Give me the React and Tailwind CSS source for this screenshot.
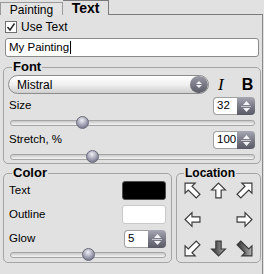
import React from "react";

function Spinner({ value, className }) {
  return (
    <div className={"flex h-[18px] w-[42px] " + className}>
      <div className="flex-1 bg-white border border-[#a0a0a0] border-r-0 rounded-l-[4px] flex items-center pl-[3px] text-[11.5px] leading-none text-black">
        {value}
      </div>
      <div className="w-[18px] rounded-r-[4px] bg-linear-to-b from-[#a8a8b4] via-[#7c7c88] to-[#5a5a66] flex flex-col items-center justify-center gap-[1px]">
        <svg width="7" height="4" viewBox="0 0 7 4"><path d="M0 4 L3.5 0 L7 4Z" fill="#f4f4f8" /></svg>
        <div className="w-[10px] h-px bg-[#c8c8d0]" />
        <svg width="7" height="4" viewBox="0 0 7 4"><path d="M0 0 L3.5 4 L7 0Z" fill="#f4f4f8" /></svg>
      </div>
    </div>
  );
}

function Slider({ pos, className }) {
  return (
    <div className={"relative h-[13px] flex items-center " + className}>
      <div className="w-full h-[6px] rounded-full border border-[#a4a4a4] bg-linear-to-b from-[#c8c8c8] to-[#f6f6f6]" />
      <div
        className="absolute top-0 w-[13px] h-[13px] rounded-full border border-[#6a6a7a] bg-[radial-gradient(circle_at_45%_30%,#f0f0f6,#9a9aae_55%,#5e5e72)]"
        style={{ left: pos }}
      />
    </div>
  );
}

const STRAIGHT = "8,1 14.5,7.5 10.5,7.5 10.5,15 5.5,15 5.5,7.5 1.5,7.5";
const DIAG = "1,1 10.5,1 7.5,4 15,11.5 11.5,15 4,7.5 1,10.5";

function Arrow({ rot, diag, filled }) {
  const id = "g" + rot + (diag ? "d" : "s");
  return (
    <svg width="17" height="17" viewBox="0 0 16 16">
      <defs>
        <linearGradient id={id} x1="0" y1="0" x2="1" y2="0">
          <stop offset="0" stopColor="#b4b4b4" />
          <stop offset="0.5" stopColor="#6a6a6a" />
          <stop offset="1" stopColor="#333333" />
        </linearGradient>
      </defs>
      <polygon
        points={diag ? DIAG : STRAIGHT}
        transform={`rotate(${rot} 8 8)`}
        fill={filled ? `url(#${id})` : "#ffffff"}
        stroke="#3a3a3a"
        strokeWidth="1.1"
        strokeLinejoin="miter"
      />
    </svg>
  );
}

export default function App() {
  return (
    <div className="w-[264px] h-[274px] bg-[#e1e1e1] overflow-hidden font-['Liberation_Sans',Arial,sans-serif] text-[11.5px] text-black">
      {/* Tabs */}
      <div className="flex h-[15px] items-end">
        <div className="h-[13px] w-[63px] border border-b-0 border-[#9a9a9a] bg-[#e4e4e4] flex items-center justify-center text-[12px] leading-none pt-[1px]">
          Painting
        </div>
        <div className="h-[15px] w-[46px] border border-b-0 border-l-0 border-[#7a7a7a] bg-[#e1e1e1] flex items-center justify-center text-[14px] font-bold leading-none">
          Text
        </div>
        <div className="flex-1 h-px bg-[#7a7a7a] mr-[1px]" />
      </div>
      {/* Panel */}
      <div className="h-[259px] border-r border-[#8a8a8a] mr-[1px] flex flex-col">
        <div className="flex items-center h-[17px] mt-[3px] pl-[5px] gap-[4px]">
          <div className="w-[12px] h-[12px] border border-[#707070] bg-white flex items-center justify-center">
            <svg width="10" height="10" viewBox="0 0 10 10">
              <path d="M1.5 5 L4 8 L8.5 1.5" fill="none" stroke="#222" strokeWidth="1.4" />
            </svg>
          </div>
          <span className="leading-none text-[12px]">Use Text</span>
        </div>
        <div className="ml-[5px] mr-[3px] mt-[3px] h-[19px] bg-white border border-[#8a8a8a] rounded-[3px] flex items-center pl-[3px] leading-none text-[11.5px]">
          My Painting<span className="inline-block w-px h-[13px] bg-black ml-[1px]" />
        </div>
        {/* Font */}
        <fieldset className="ml-[3px] mr-[1px] mt-[3px] h-[104px] border border-[#a4a4a4] rounded-[5px] px-[4px]">
          <legend className="ml-[4px] px-[1px] font-bold text-[13px] leading-[14px]">Font</legend>
          <div className="flex items-center mt-[1px] h-[19px]">
            <div className="w-[201px] h-[19px] rounded-full border border-[#8c8c8c] bg-linear-to-b from-[#ffffff] via-[#f0f0f0] to-[#cfcfcf] flex items-center overflow-hidden">
              <span className="flex-1 pl-[8px] leading-none text-[12px]">Mistral</span>
              <div className="w-[18px] h-full rounded-full bg-linear-to-b from-[#9a9aa6] to-[#5c5c68] flex flex-col items-center justify-center gap-[1px]">
                <svg width="6" height="3" viewBox="0 0 6 3"><path d="M0 3 L3 0 L6 3Z" fill="#f0f0f4" /></svg>
                <svg width="6" height="3" viewBox="0 0 6 3"><path d="M0 0 L3 3 L6 0Z" fill="#f0f0f4" /></svg>
              </div>
            </div>
            <span className="ml-[9px] font-['Liberation_Serif',serif] italic text-[17px] leading-none">I</span>
            <span className="ml-[18px] font-bold text-[16px] leading-none">B</span>
          </div>
          <div className="flex items-center justify-between mt-[3px] h-[18px] pr-[1px]">
            <span className="pl-[1px] leading-none">Size</span>
            <Spinner value="32" className="" />
          </div>
          <Slider pos={66} className="mt-[1px] ml-[2px] mr-[1px]" />
          <div className="flex items-center justify-between mt-[2px] h-[18px] pr-[1px]">
            <span className="pl-[1px] leading-none">Stretch, %</span>
            <Spinner value="100" className="" />
          </div>
          <Slider pos={76} className="mt-[1px] ml-[2px] mr-[1px]" />
        </fieldset>
        {/* Bottom groups */}
        <div className="flex mt-[2px] ml-[3px] mr-[1px] gap-[4px]">
          <fieldset className="w-[169px] h-[97px] border border-[#a4a4a4] rounded-[5px] px-[4px]">
            <legend className="ml-[4px] px-[1px] font-bold text-[13px] leading-[14px]">Color</legend>
            <div className="flex items-center justify-between h-[19px] mt-[1px] pr-[1px]">
              <span className="leading-none pl-[1px]">Text</span>
              <div className="w-[44px] h-[19px] rounded-[3px] bg-black border border-[#505050]" />
            </div>
            <div className="flex items-center justify-between h-[19px] mt-[5px] pr-[1px]">
              <span className="leading-none pl-[1px]">Outline</span>
              <div className="w-[44px] h-[19px] rounded-[3px] bg-white border border-[#c8c8c8]" />
            </div>
            <div className="flex items-center justify-between h-[18px] mt-[6px] pr-[1px]">
              <span className="leading-none pl-[1px]">Glow</span>
              <Spinner value="5" className="" />
            </div>
            <Slider pos={72} className="mt-[0px] ml-[2px] mr-[1px]" />
          </fieldset>
          <fieldset className="flex-1 h-[97px] border border-[#a4a4a4] rounded-[5px] px-[3px]">
            <legend className="ml-[4px] px-[1px] font-bold text-[12px] leading-[14px]">Location</legend>
            <div className="grid grid-cols-3 gap-y-[12px] justify-items-center mt-[2px]">
              <Arrow rot={0} diag />
              <Arrow rot={0} />
              <Arrow rot={90} diag />
              <Arrow rot={-90} />
              <div />
              <Arrow rot={90} />
              <Arrow rot={270} diag />
              <Arrow rot={180} filled />
              <Arrow rot={180} diag filled />
            </div>
          </fieldset>
        </div>
      </div>
    </div>
  );
}
